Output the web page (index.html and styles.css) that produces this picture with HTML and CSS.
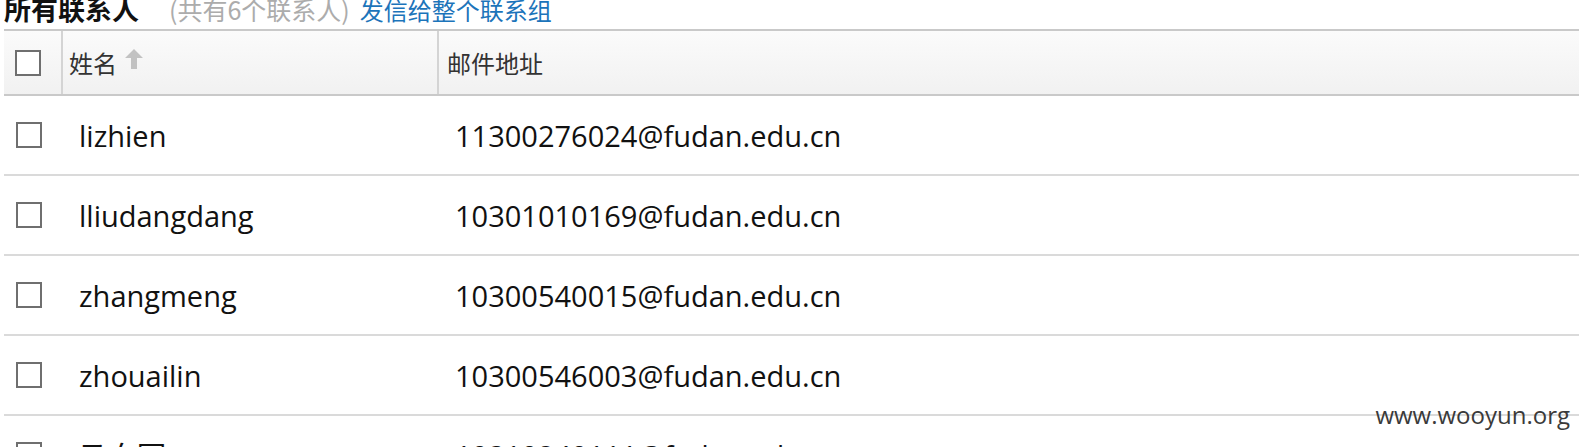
FILE: index.html
```html
<!DOCTYPE html>
<html lang="zh-CN">
<head>
<meta charset="utf-8">
<title>所有联系人</title>
<link rel="stylesheet" href="styles.css">
</head>
<body>
<div class="page">
  <div class="title-bar">
    <h2 class="title">所有联系人</h2>
    <span class="count">(共有6个联系人)</span>
    <a class="send-all" href="#">发信给整个联系组</a>
  </div>
  <table class="contacts">
    <colgroup>
      <col class="col-check">
      <col class="col-name">
      <col class="col-mail">
    </colgroup>
    <thead>
      <tr>
        <th class="cell-check"><span class="box"></span></th>
        <th class="cell-name">姓名<svg class="sort" width="20" height="20" viewBox="0 0 20 20"><polygon points="10,0 19,9 13,9 13,20 7,20 7,9 1,9" fill="#c2c2c2"/></svg></th>
        <th class="cell-mail">邮件地址</th>
      </tr>
    </thead>
    <tbody>
      <tr><td class="cell-check"><span class="box"></span></td><td class="cell-name">lizhien</td><td class="cell-mail">11300276024@fudan.edu.cn</td></tr>
      <tr><td class="cell-check"><span class="box"></span></td><td class="cell-name">lliudangdang</td><td class="cell-mail">10301010169@fudan.edu.cn</td></tr>
      <tr><td class="cell-check"><span class="box"></span></td><td class="cell-name">zhangmeng</td><td class="cell-mail">10300540015@fudan.edu.cn</td></tr>
      <tr><td class="cell-check"><span class="box"></span></td><td class="cell-name">zhouailin</td><td class="cell-mail">10300546003@fudan.edu.cn</td></tr>
      <tr><td class="cell-check"><span class="box"></span></td><td class="cell-name">马向军</td><td class="cell-mail">10310240111@fudan.edu.cn</td></tr>
    </tbody>
  </table>
  <div class="watermark">www.wooyun.org</div>
</div>
</body>
</html>
```
FILE: styles.css
```css
html, body {
  margin: 0;
  padding: 0;
  background: #fff;
  overflow: hidden;
}
body {
  font-family: "Open Sans", "Noto Sans CJK SC", sans-serif;
  color: #111;
}
.page {
  position: relative;
  height: 447px;
  padding-left: 4px;
  overflow: hidden;
}
.title-bar {
  height: 34px;
  margin-top: -5px;
  display: flex;
  align-items: baseline;
  font-family: "Noto Sans CJK SC", sans-serif;
  line-height: 27px;
}
.title {
  margin: 0;
  font-size: 27px;
  font-weight: 700;
  color: #111;
}
.count {
  margin-left: 30px;
  font-size: 25px;
  color: #acacac;
}
.send-all {
  margin-left: 10px;
  font-size: 24px;
  color: #1c74ba;
  text-decoration: none;
}
.contacts {
  width: calc(100% + 20px);
  border-collapse: collapse;
  table-layout: fixed;
}
.col-check { width: 58px; }
.col-name { width: 376px; }
.contacts thead tr {
  height: 65px;
  background: linear-gradient(#fbfbfb, #f1f1f1);
}
.contacts th {
  border-top: 2px solid #c9c9c9;
  border-bottom: 2px solid #c9c9c9;
  font-family: "Noto Sans CJK SC", sans-serif;
  font-weight: 400;
  font-size: 24px;
  color: #333;
  text-align: left;
  padding: 0;
  vertical-align: middle;
}
.contacts th + th {
  border-left: 2px solid #d4d4d4;
}
.contacts th.cell-name { padding-left: 6px; }
.contacts th.cell-mail { padding-left: 8px; }
.sort {
  vertical-align: top;
  margin: 4px 0 0 7px;
}
.contacts td {
  height: 78px;
  border-bottom: 2px solid #dadada;
  padding: 0;
  vertical-align: middle;
  font-size: 29px;
  color: #111;
}
.contacts td.cell-name { padding-left: 17px; }
.contacts td.cell-mail { padding-left: 17px; }
.cell-check { padding-left: 11px !important; }
.box {
  display: block;
  width: 22px;
  height: 22px;
  border: 2px solid #6f6f6f;
  background: #fff;
}
.contacts td .box { margin: 0 0 0 1px; }
.watermark {
  position: absolute;
  right: 9px;
  top: 398px;
  font-size: 24px;
  color: #3a3a3a;
  font-family: "Open Sans", sans-serif;
}
```
